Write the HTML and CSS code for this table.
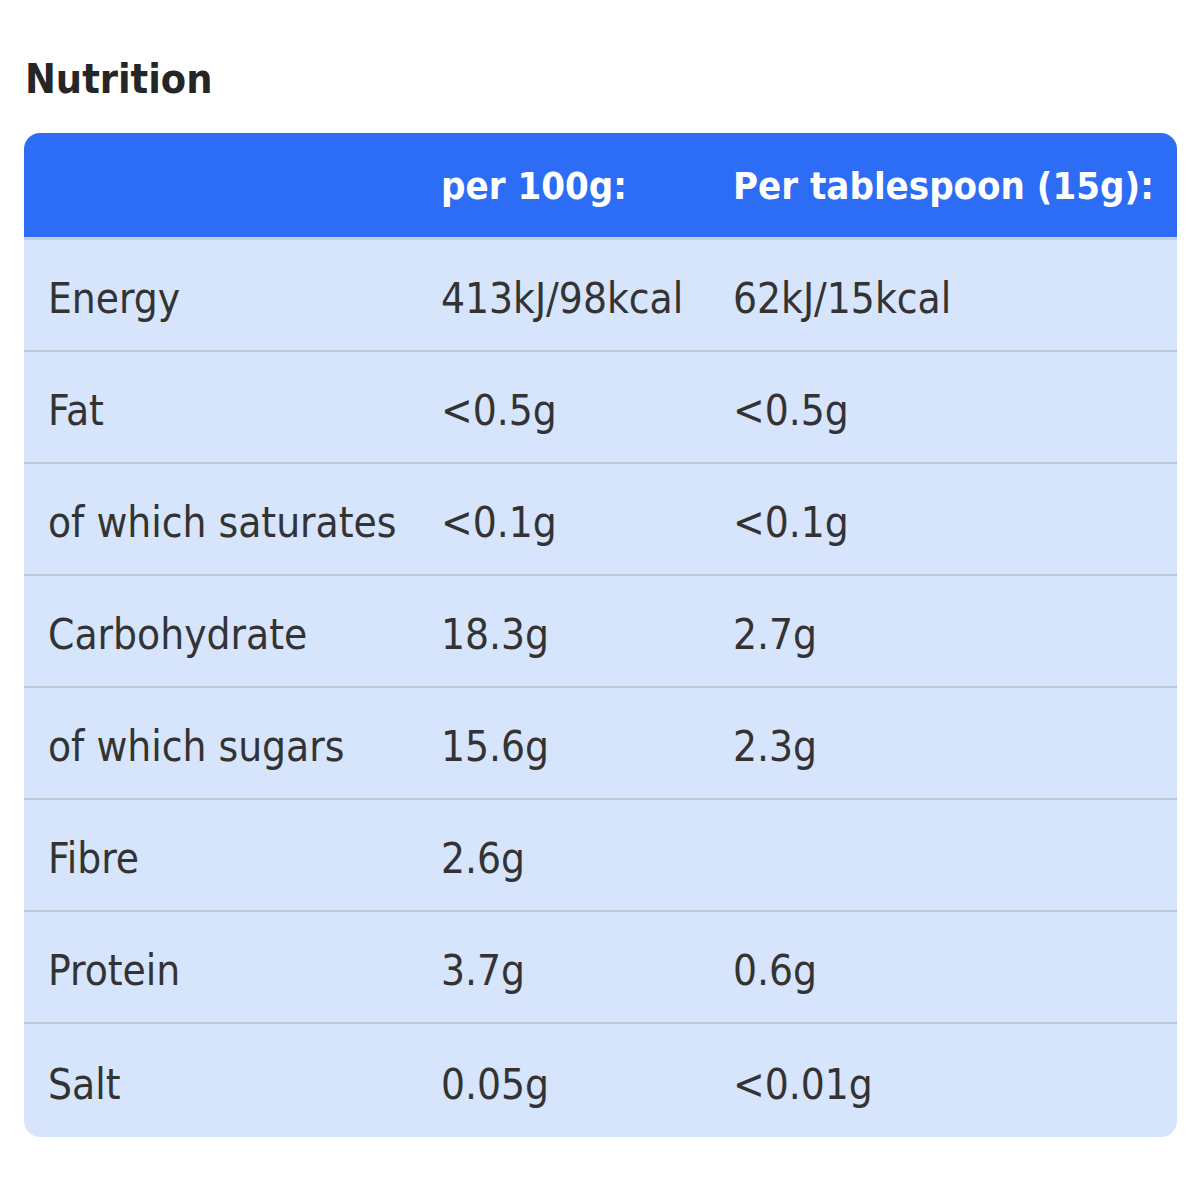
FILE: index.html
```html
<!DOCTYPE html>
<html>
<head>
<meta charset="utf-8">
<link rel="stylesheet" href="styles.css">
</head>
<body>
<div class="page">
  <h2 class="title">Nutrition</h2>
  <table class="nutri">
    <colgroup>
      <col class="c1"><col class="c2"><col class="c3">
    </colgroup>
    <thead>
      <tr><th></th><th>per 100g:</th><th>Per tablespoon (15g):</th></tr>
    </thead>
    <tbody>
      <tr><td>Energy</td><td>413kJ/98kcal</td><td>62kJ/15kcal</td></tr>
      <tr><td>Fat</td><td>&lt;0.5g</td><td>&lt;0.5g</td></tr>
      <tr><td>of which saturates</td><td>&lt;0.1g</td><td>&lt;0.1g</td></tr>
      <tr><td>Carbohydrate</td><td>18.3g</td><td>2.7g</td></tr>
      <tr><td>of which sugars</td><td>15.6g</td><td>2.3g</td></tr>
      <tr><td>Fibre</td><td>2.6g</td><td></td></tr>
      <tr><td>Protein</td><td>3.7g</td><td>0.6g</td></tr>
      <tr><td>Salt</td><td>0.05g</td><td>&lt;0.01g</td></tr>
    </tbody>
  </table>
</div>
</body>
</html>
```
FILE: styles.css
```css
html, body { margin: 0; padding: 0; background: #fff; }
.page { padding: 56px 23px 0 24px; font-family: "DejaVu Sans Condensed", "DejaVu Sans", sans-serif; color: #333; }
.title { margin: 0 0 31px 1px; font-size: 41px; line-height: 46px; font-weight: bold; color: #262626; }
.nutri { width: 1153px; border-collapse: separate; border-spacing: 0; table-layout: fixed; border-radius: 16px; overflow: hidden; }
.c1 { width: 393px; } .c2 { width: 292px; } .c3 { width: 468px; }
.nutri th { box-sizing: border-box; background: #2d6cf5; color: #fff; font-weight: bold; font-size: 38px; text-align: left; height: 107px; padding: 2px 0 0 24px; border-bottom: 3px solid #c9cdd4; white-space: nowrap; }
.nutri td { box-sizing: border-box; background: #d6e4fc; font-size: 42px; height: 112px; padding: 7px 0 0 24px; border-bottom: 2px solid #c2c8d2; white-space: nowrap; color: #333; }
.nutri tbody tr:last-child td { border-bottom: none; height: 113px; }
```
